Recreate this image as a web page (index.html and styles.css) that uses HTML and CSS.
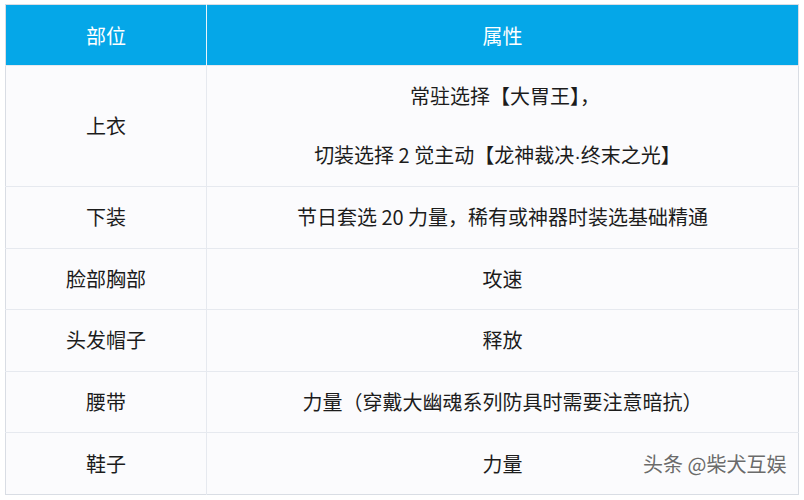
FILE: index.html
```html
<!DOCTYPE html>
<html lang="zh-CN">
<head>
<meta charset="utf-8">
<link rel="stylesheet" href="styles.css">
</head>
<body>
<div class="page">
  <table class="gear">
    <colgroup><col class="c1"><col class="c2"></colgroup>
    <thead>
      <tr><th>部位</th><th>属性</th></tr>
    </thead>
    <tbody>
      <tr class="tall">
        <td>上衣</td>
        <td><p class="l1">常驻选择【大胃王】，</p><p class="l2">切装选择 2 觉主动【龙神裁决<span class="dot">·</span>终末之光】</p></td>
      </tr>
      <tr><td>下装</td><td>节日套选 20 力量，稀有或神器时装选基础精通</td></tr>
      <tr><td>脸部胸部</td><td>攻速</td></tr>
      <tr><td>头发帽子</td><td>释放</td></tr>
      <tr><td>腰带</td><td>力量（穿戴大幽魂系列防具时需要注意暗抗）</td></tr>
      <tr><td>鞋子</td><td>力量</td></tr>
    </tbody>
  </table>
  <div class="mark">头条 @柴犬互娱</div>
</div>
</body>
</html>
```
FILE: styles.css
```css
html, body {
  margin: 0;
  padding: 0;
  background: #ffffff;
}
body {
  font-family: "Noto Sans CJK SC", "Noto Sans", sans-serif;
  color: #1c1c1c;
}
.page {
  position: relative;
  width: 804px;
  height: 500px;
  padding: 4px 0 0 5px;
  box-sizing: border-box;
}
.gear {
  border-collapse: collapse;
  width: 793px;
  background: #fbfbfd;
  border: 1px solid #d9dde4;
  table-layout: fixed;
}
.c1 { width: 201px; }
.c2 { width: 592px; }
.gear th {
  background: #05a7e8;
  color: #ffffff;
  font-weight: normal;
  font-size: 20px;
  height: 60px;
  padding: 0;
  text-align: center;
  border-left: 1px solid #e8f4fb;
}
.gear th:first-child { border-left: none; }
.gear td {
  height: 60.6px;
  padding: 0;
  text-align: center;
  font-size: 20px;
  line-height: 24px;
  border-top: 1px solid #e6e9ef;
  border-left: 1px solid #e6e9ef;
}
.gear td:first-child { border-left: none; }
.gear tr.tall td { height: 120px; }
.gear p { margin: 0; }
.gear p.l1 { margin-left: 5px; }
.gear p.l2 { margin-top: 35px; margin-right: 10px; }
.dot { font-family: "Liberation Sans", sans-serif; }
.mark {
  position: absolute;
  left: 643px;
  top: 449px;
  font-size: 20px;
  color: #6b6b6b;
  text-shadow: 0 0 2px #ffffff, 0 0 3px #ffffff;
}
```
